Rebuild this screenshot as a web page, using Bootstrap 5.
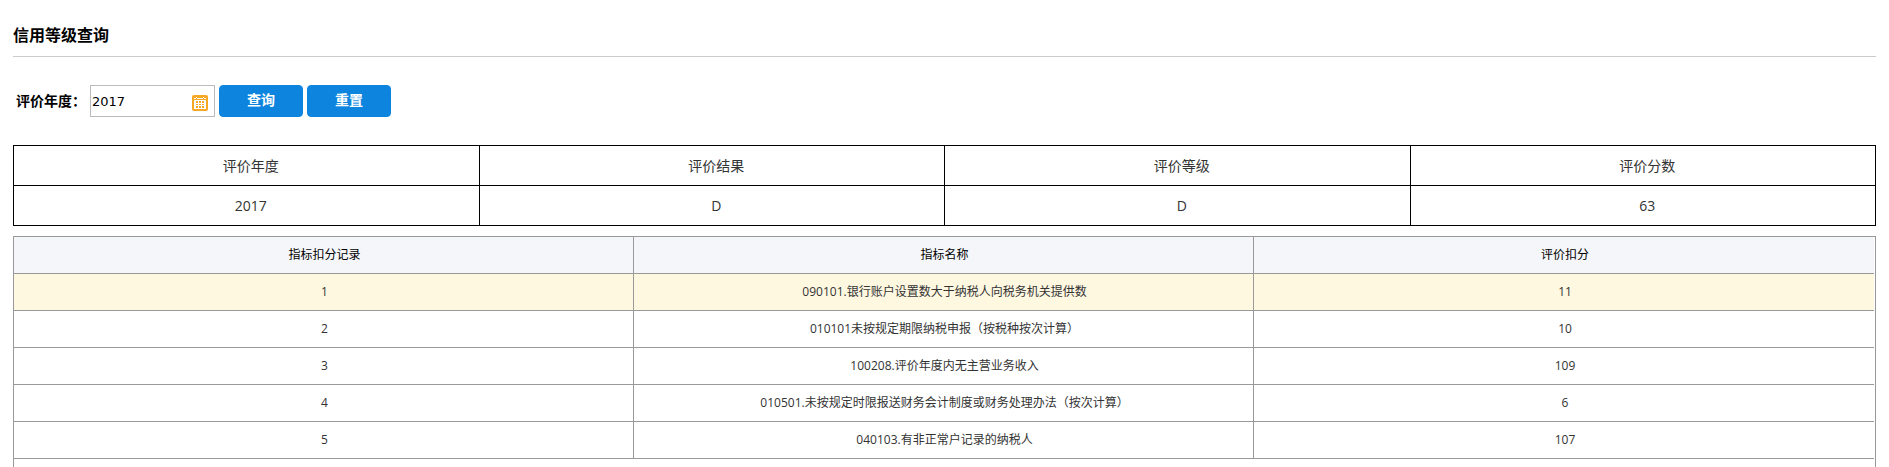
<!DOCTYPE html>
<html lang="zh-CN">
<head>
<meta charset="utf-8">
<meta name="viewport" content="width=device-width, initial-scale=1">
<title>信用等级查询</title>
<link href="https://cdn.jsdelivr.net/npm/bootstrap@5.3.0/dist/css/bootstrap.min.css" rel="stylesheet">
<style>
body { font-family: "Open Sans", "Noto Sans CJK SC", sans-serif; font-size: 14px; color: #333; background: #fff; }
.page-body { padding: 0 13px; }
.page-title { font-size: 16px; line-height: 24px; font-weight: 700; color: #000; padding: 23px 0 9px; border-bottom: 1px solid #ccc; }
.query-bar { padding: 28px 3px; gap: 4px; }
.query-bar label { width: 70px; padding-bottom: 2px; font-weight: 700; color: #000; white-space: nowrap; }
.year-field { width: 125px; }
.year-field input { height: 32px; padding: 0 24px 0 1px; border: 1px solid #bbb; border-radius: 0; font-family: "DejaVu Sans", sans-serif; font-size: 13px; color: #000; }
.year-field svg { right: 7px; top: 10px; }
.btn-query { width: 84px; height: 32px; padding: 0 0 2px; font-size: 14px; line-height: 20px; font-weight: 700; border-radius: 4px;
  --bs-btn-color: #fff; --bs-btn-bg: #0d84de; --bs-btn-border-color: #0d84de;
  --bs-btn-hover-color: #fff; --bs-btn-hover-bg: #0b74c4; --bs-btn-hover-border-color: #0b74c4; }
.result-table, .detail-table { table-layout: fixed; width: 100%; text-align: center; }
.result-table { margin-bottom: 10px; }
.result-table th, .result-table td { height: 40px; padding: 0 0 0 9px; border: 1px solid #000; font-weight: 400; line-height: 20px; }
.detail-box { border: 1px solid #999; border-bottom: 0; padding-right: 1px; }
.detail-table { border-collapse: separate; border-spacing: 0; font-size: 12px; line-height: 18px; }
.detail-table th, .detail-table td { height: 37px; padding: 0 0 0 2px; border-bottom: 1px solid #999; border-right: 1px solid #999; }
.detail-table th:last-child, .detail-table td:last-child { border-right: 0; }
.detail-table th { background: #f5f6fa; color: #000; font-weight: 400; }
.detail-table .row-active td { background: #fff8e1; }
</style>
</head>
<body>
<main class="page-body d-flex flex-column vh-100 overflow-hidden">
  <h1 class="page-title mb-0">信用等级查询</h1>
  <form class="query-bar d-flex align-items-center" onsubmit="return false">
    <label for="year">评价年度：</label>
    <div class="year-field position-relative">
      <input id="year" type="text" class="form-control" value="2017">
      <svg class="position-absolute" width="16" height="16" viewBox="0 0 16 16" aria-hidden="true">
        <rect width="16" height="16" rx="2" fill="#f9a825"/>
        <path fill="#fff" d="M2 3h2v1h1V3h6v1h1V3h2v1H2zM4 2h1v1H4zM11 2h1v1h-1zM2 5h12v9H2z"/>
        <path fill="#f9a825" d="M4 6h2v2H4zM7 6h2v2H7zM10 6h2v2h-2zM4 9h2v1H4zM7 9h2v1H7zM10 9h2v1h-2zM4 11h2v2H4zM7 11h2v2H7zM10 11h2v2h-2z"/>
      </svg>
    </div>
    <button type="submit" class="btn btn-query">查询</button>
    <button type="reset" class="btn btn-query">重置</button>
  </form>
  <table class="result-table">
    <thead><tr><th scope="col">评价年度</th><th scope="col">评价结果</th><th scope="col">评价等级</th><th scope="col">评价分数</th></tr></thead>
    <tbody><tr><td>2017</td><td>D</td><td>D</td><td>63</td></tr></tbody>
  </table>
  <div class="detail-box flex-grow-1">
    <table class="detail-table">
      <thead><tr><th scope="col">指标扣分记录</th><th scope="col">指标名称</th><th scope="col">评价扣分</th></tr></thead>
      <tbody>
        <tr class="row-active"><td>1</td><td>090101.银行账户设置数大于纳税人向税务机关提供数</td><td>11</td></tr>
        <tr><td>2</td><td>010101未按规定期限纳税申报（按税种按次计算）</td><td>10</td></tr>
        <tr><td>3</td><td>100208.评价年度内无主营业务收入</td><td>109</td></tr>
        <tr><td>4</td><td>010501.未按规定时限报送财务会计制度或财务处理办法（按次计算）</td><td>6</td></tr>
        <tr><td>5</td><td>040103.有非正常户记录的纳税人</td><td>107</td></tr>
      </tbody>
    </table>
  </div>
</main>
<script src="https://cdn.jsdelivr.net/npm/bootstrap@5.3.0/dist/js/bootstrap.bundle.min.js"></script>
</body>
</html>
